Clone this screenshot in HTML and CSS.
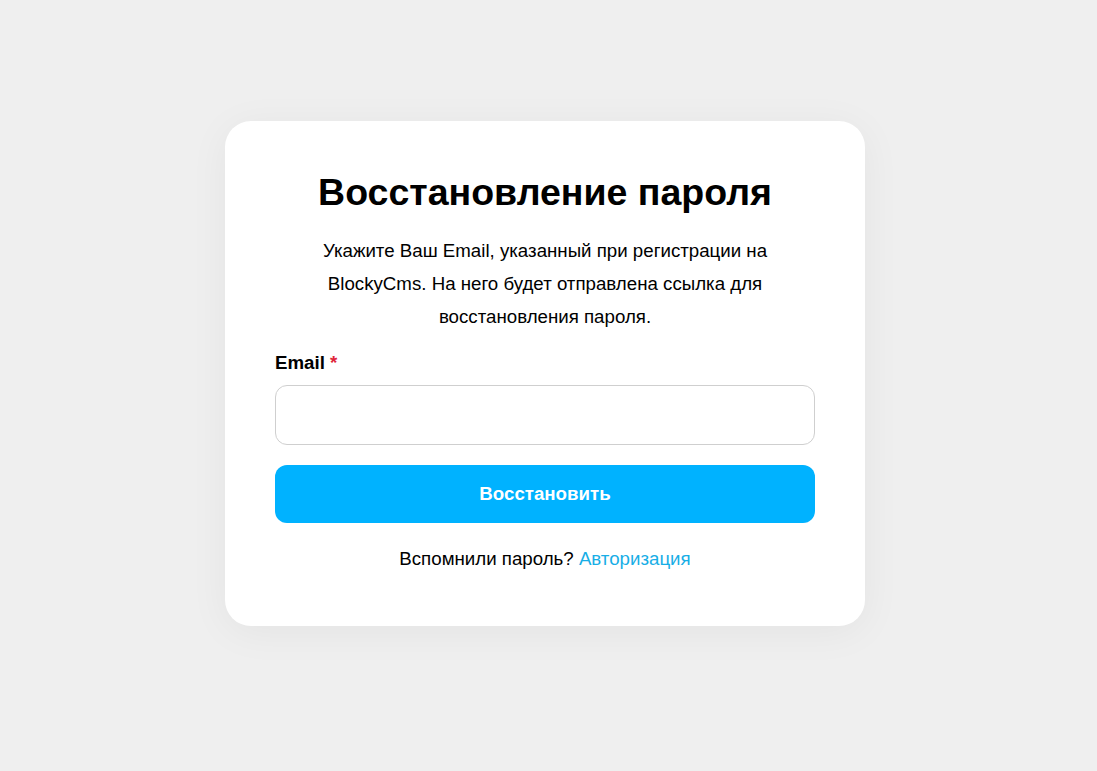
FILE: index.html
```html
<!DOCTYPE html>
<html lang="ru">
<head>
<meta charset="utf-8">
<title>Восстановление пароля</title>
<link rel="stylesheet" href="styles.css">
</head>
<body>
<main class="card">
  <h1 class="title">Восстановление пароля</h1>
  <p class="lead">Укажите Ваш Email, указанный при регистрации на BlockyCms. На него будет отправлена ссылка для восстановления пароля.</p>
  <form class="form">
    <label class="label" for="email">Email <span class="req">*</span></label>
    <input class="input" id="email" type="email">
    <button class="btn" type="button">Восстановить</button>
  </form>
  <p class="footer">Вспомнили пароль? <a class="link" href="#">Авторизация</a></p>
</main>
</body>
</html>
```

FILE: styles.css
```css
* { box-sizing: border-box; }
html, body { margin: 0; padding: 0; }
body {
  background: #efefef;
  font-family: "Liberation Sans", Arial, sans-serif;
  color: #000;
  min-height: 771px;
  padding-top: 121px;
  padding-left: 225px;
}
.card {
  width: 640px;
  background: #fff;
  border-radius: 26px;
  padding: 50px 50px 56px;
  box-shadow: 0 6px 40px rgba(0,0,0,0.05);
  display: flex;
  flex-direction: column;
}
.title {
  margin: 0;
  font-size: 37.5px;
  line-height: 43px;
  font-weight: 700;
  text-align: center;
}
.lead {
  margin: 20px auto 0;
  max-width: 480px;
  font-size: 18.7px;
  line-height: 33px;
  text-align: center;
}
.form {
  margin-top: 19px;
  display: flex;
  flex-direction: column;
}
.label {
  font-size: 18.7px;
  line-height: 22px;
  font-weight: 700;
}
.req { color: #e0243a; }
.input {
  margin-top: 11px;
  height: 60px;
  border: 1px solid #cfcfcf;
  border-radius: 12px;
  background: #fff;
  font: inherit;
  padding: 0 16px;
  outline: none;
}
.btn {
  margin-top: 20px;
  height: 58px;
  border: 0;
  border-radius: 12px;
  background: #00b2ff;
  color: #fff;
  font-family: inherit;
  font-size: 18.7px;
  font-weight: 700;
  cursor: pointer;
}
.footer {
  margin: 25px 0 0;
  font-size: 18.7px;
  line-height: 22px;
  text-align: center;
}
.link { color: #18aee6; text-decoration: none; }
```
